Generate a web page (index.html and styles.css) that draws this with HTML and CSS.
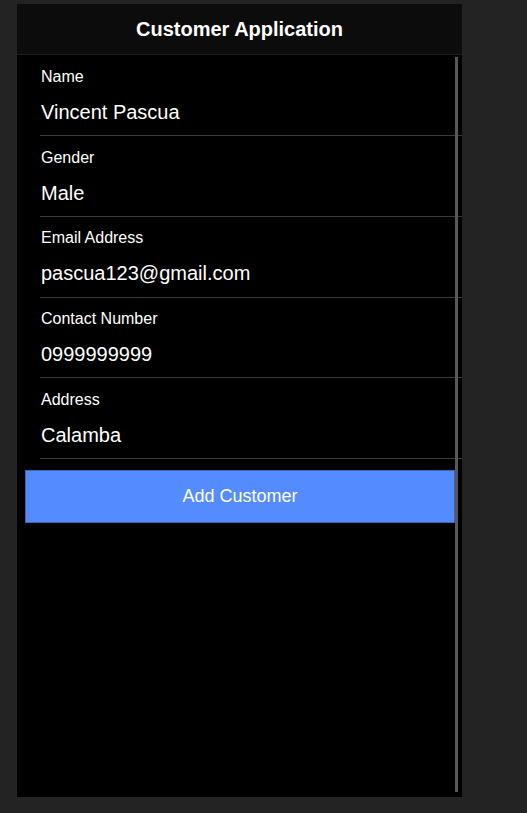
FILE: index.html
```html
<!DOCTYPE html>
<html>
<head>
<meta charset="utf-8">
<link rel="stylesheet" href="styles.css">
</head>
<body>
<div class="app">
  <header class="header">Customer Application</header>
  <div class="content">
    <div class="field"><div class="label">Name</div><div class="value">Vincent Pascua</div></div>
    <div class="field"><div class="label">Gender</div><div class="value">Male</div></div>
    <div class="field"><div class="label">Email Address</div><div class="value">pascua123@gmail.com</div></div>
    <div class="field"><div class="label">Contact Number</div><div class="value">0999999999</div></div>
    <div class="field"><div class="label">Address</div><div class="value">Calamba</div></div>
    <button class="submit">Add Customer</button>
  </div>
  <div class="scrollbar"></div>
</div>
</body>
</html>
```
FILE: styles.css
```css
html, body {
  margin: 0;
  padding: 0;
  background: #232323;
  height: 100%;
}
body {
  padding: 4px 0 0 17px;
  box-sizing: border-box;
  font-family: "Liberation Sans", Arial, sans-serif;
  color: #fff;
}
.app {
  position: relative;
  width: 445px;
  height: 793px;
  background: #000;
  display: flex;
  flex-direction: column;
}
.header {
  height: 50.25px;
  line-height: 50.25px;
  background: #0c0c0c;
  border-bottom: 1px solid #1f1f1f;
  text-align: center;
  font-weight: bold;
  font-size: 20px;
}
.content {
  display: flex;
  flex-direction: column;
}
.field {
  margin-left: 23px;
  padding: 11.5px 0 11.25px 0;
  border-bottom: 1px solid #3b3b3b;
  display: flex;
  flex-direction: column;
  gap: 14px;
}
.label {
  font-size: 16px;
  line-height: 19px;
  padding-left: 1px;
}
.value {
  font-size: 20px;
  line-height: 24px;
  padding-left: 1px;
}
.submit {
  margin: 10.5px 7px 0 8px;
  height: 53px;
  background: #548cff;
  border: 1px solid #3a63bd;
  color: #fff;
  font-family: "Liberation Sans", Arial, sans-serif;
  font-size: 18px;
  padding: 0;
}
.scrollbar {
  position: absolute;
  left: 438px;
  top: 53px;
  width: 3px;
  height: 735px;
  background: #575757;
}
```
